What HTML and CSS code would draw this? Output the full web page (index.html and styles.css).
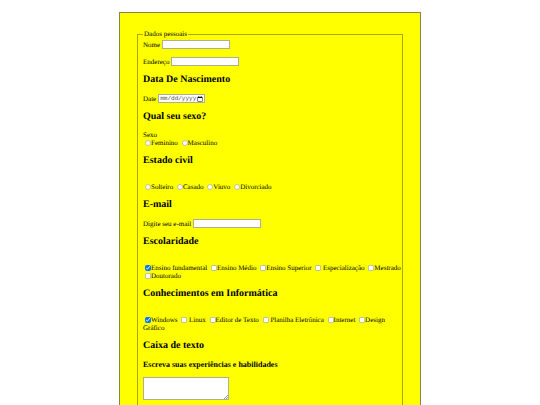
FILE: index.html
```html
<!DOCTYPE html>
<html lang="pt-BR">
<head>
<meta charset="utf-8">
<meta name="viewport" content="width=device-width, initial-scale=1">
<title>Dados pessoais</title>
<link rel="stylesheet" href="styles.css">
</head>
<body>
<form class="card">
  <fieldset class="group">
    <legend>Dados pessoais</legend>
    <p class="field"><label for="nome">Nome</label> <input class="text" type="text" id="nome"></p>
    <p class="field"><label for="endereco">Endereço</label> <input class="text" type="text" id="endereco"></p>

    <h2>Data De Nascimento</h2>
    <p class="field"><label for="data">Date</label> <input class="date" type="date" id="data"></p>

    <h2>Qual seu sexo?</h2>
    <p class="options">Sexo<br>
      <input type="radio" name="sexo" id="fem"><label for="fem">Feminino</label>
      <input type="radio" name="sexo" id="masc"><label for="masc">Masculino</label></p>

    <h2>Estado civil</h2>
    <p class="options"><br>
      <input type="radio" name="civil" id="solteiro"><label for="solteiro">Solteiro</label>
      <input type="radio" name="civil" id="casado"><label for="casado">Casado</label>
      <input type="radio" name="civil" id="viuvo"><label for="viuvo">Viuvo</label>
      <input type="radio" name="civil" id="divorciado"><label for="divorciado">Divorciado</label></p>

    <h2>E-mail</h2>
    <p class="field"><label for="email">Digite seu e-mail</label> <input class="text" type="email" id="email"></p>

    <h2>Escolaridade</h2>
    <p class="options"><br>
      <input type="checkbox" id="fundamental" checked><label for="fundamental">Ensino fundamental</label>
      <input type="checkbox" id="medio"><label for="medio">Ensino Médio</label>
      <input type="checkbox" id="superior"><label for="superior">Ensino Superior</label>
      <input type="checkbox" id="espec"> <label for="espec">Especialização</label>
      <input type="checkbox" id="mestrado"><label for="mestrado">Mestrado</label>
      <input type="checkbox" id="doutorado"><label for="doutorado">Doutorado</label></p>

    <h2>Conhecimentos em Informática</h2>
    <p class="options"><br>
      <input type="checkbox" id="windows" checked><label for="windows">Windows</label>
      <input type="checkbox" id="linux"> <label for="linux">Linux</label>
      <input type="checkbox" id="editor"><label for="editor">Editor de Texto</label>
      <input type="checkbox" id="planilha"> <label for="planilha">Planilha Eletrônica</label>
      <input type="checkbox" id="internet"><label for="internet">Internet</label>
      <input type="checkbox" id="design"><label for="design">Design Gráfico</label></p>

    <h2>Caixa de texto</h2>
    <h3><label for="experiencias">Escreva suas experiências e habilidades</label></h3>
    <textarea id="experiencias"></textarea>
  </fieldset>
</form>
</body>
</html>
```
FILE: styles.css
```css
* {
  box-sizing: border-box;
}

body {
  margin: 12px;
  background: #fff;
  color: #000;
  font: 7px/8px "Liberation Serif", serif;
  text-rendering: geometricPrecision;
}

.card {
  max-width: 302px;
  margin: 0 auto;
  padding: 17px;
  border: 1px solid #85854a;
  background: #ff0;
}

.group {
  min-width: 0;
  margin: 0;
  padding: 2px 0 8px 5px;
  border: 1px solid #a8a800;
}

legend {
  padding: 0 1px;
}

h2,
h3,
p {
  margin: 8px 0;
}

h2 {
  font-size: 10px;
  line-height: 12px;
}

h3 {
  font-size: 8px;
  line-height: 9px;
}

.field {
  display: flex;
  align-items: center;
  gap: 2px;
  height: 9px;
}

legend + .field {
  margin-top: 0;
}

.text,
.date,
textarea {
  margin: 0;
  border: 1px solid #b0b090;
  background: #fff;
  font-size: 6px;
}

.text {
  width: 68px;
  height: 9px;
  padding: 0 1px;
}

.date {
  width: 47px;
  height: 9px;
  padding: 0 1px;
  color: #555;
  font-family: "Liberation Mono", monospace;
  line-height: 7px;
  text-rendering: geometricPrecision;
}

.date::-webkit-datetime-edit,
.date::-webkit-datetime-edit-fields-wrapper,
.date::-webkit-datetime-edit-text,
.date::-webkit-datetime-edit-month-field,
.date::-webkit-datetime-edit-day-field,
.date::-webkit-datetime-edit-year-field {
  padding: 0;
}

.date::-webkit-calendar-picker-indicator {
  width: 6px;
  height: 6px;
  margin: 0;
  padding: 0;
}

input[type="radio"],
input[type="checkbox"] {
  width: 6px;
  height: 6px;
  margin: 0 0 0 2px;
  vertical-align: -1px;
}

input[type="radio"]:not(:checked),
input[type="checkbox"]:not(:checked) {
  appearance: none;
  border: 1px solid #c4c49a;
  border-radius: 1px;
  background: #fff;
}

input[type="radio"]:not(:checked) {
  border-radius: 50%;
}

textarea {
  display: block;
  width: 86px;
  height: 23px;
  padding: 1px;
  resize: none;
  background: linear-gradient(135deg, #fff 50%, #999 50% 62%, #fff 62% 75%, #999 75% 87%, #fff 87%) right bottom / 4px 4px no-repeat #fff;
}
```
